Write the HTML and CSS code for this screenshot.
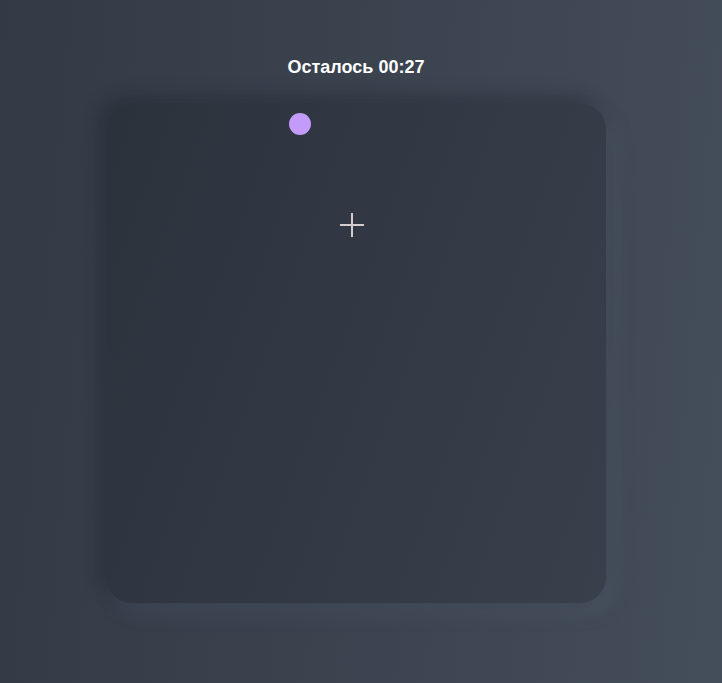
FILE: index.html
```html
<!DOCTYPE html>
<html lang="ru">
<head>
<meta charset="utf-8">
<title>Игра</title>
<link rel="stylesheet" href="styles.css">
</head>
<body>
<main class="page">
  <h1 class="timer">Осталось 00:27</h1>
  <div class="board">
    <span class="target" style="left:183px;top:10px"></span>
    <span class="cross" style="left:234px;top:110px"></span>
  </div>
</main>
</body>
</html>
```
FILE: styles.css
```css
html, body {
  margin: 0;
  height: 100%;
}
body {
  background: linear-gradient(95deg, #333a45 0%, #3b434f 50%, #444d5a 100%);
  font-family: "Liberation Sans", Arial, sans-serif;
  overflow: hidden;
}
.page {
  display: flex;
  flex-direction: column;
  align-items: center;
  padding: 56px 10px 0 0;
}
.timer {
  margin: 0;
  font-size: 18px;
  line-height: 22px;
  font-weight: 700;
  color: #ffffff;
}
.board {
  position: relative;
  margin-top: 25px;
  width: 500px;
  height: 500px;
  border-radius: 26px;
  background: linear-gradient(110deg, #2c323c 0%, #323944 50%, #38404b 100%);
  box-shadow: -6px -6px 18px rgba(20, 24, 30, 0.3), 8px 10px 18px rgba(90, 105, 125, 0.25);
}
.target {
  position: absolute;
  width: 22px;
  height: 22px;
  border-radius: 50%;
  background: #c29bfb;
}
.cross {
  position: absolute;
  width: 24px;
  height: 24px;
}
.cross::before,
.cross::after {
  content: "";
  position: absolute;
  background: #d2cccc;
}
.cross::before {
  left: 0;
  top: 11px;
  width: 24px;
  height: 2px;
}
.cross::after {
  left: 11px;
  top: 0;
  width: 2px;
  height: 24px;
}
```
